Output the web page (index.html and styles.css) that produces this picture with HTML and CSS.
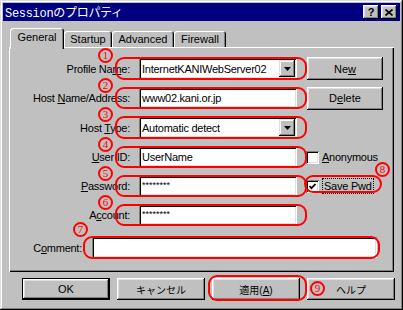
FILE: index.html
```html
<!DOCTYPE html>
<html lang="ja">

<head>
  <meta charset="UTF-8">
  <meta name="viewport" content="width=device-width, initial-scale=1.0">
  <title>Sessionのプロパティ</title>
  <link rel="stylesheet" href="styles.css">
</head>

<body>

  <div class="window">

    <div class="titlebar">
      <span class="title">Sessionのプロパティ</span>
      <div class="title-buttons">
        <button class="title-btn">?</button>
        <button class="title-btn">
          <svg width="8" height="7" viewBox="0 0 8 7">
            <path d="M0.5 0.5 L7.5 6.5 M7.5 0.5 L0.5 6.5" stroke="#000" stroke-width="1.7" fill="none" />
          </svg>
        </button>
      </div>
    </div>

    <div class="tabs">
      <div class="tab tab-general active">General</div>
      <div class="tab tab-startup">Startup</div>
      <div class="tab tab-advanced">Advanced</div>
      <div class="tab tab-firewall">Firewall</div>
    </div>

    <div class="panel">

      <div class="row">
        <span class="label">Profile Na<u>m</u>e:</span>
        <div class="hl">
          <span class="num">1</span>
          <div class="combo">
            <span class="value">InternetKANIWebServer02</span>
            <span class="drop">
              <svg width="7" height="4" viewBox="0 0 7 4"><polygon points="0,0 7,0 3.5,4" fill="#000" /></svg>
            </span>
          </div>
        </div>
        <button class="btn side-btn">Ne<u>w</u></button>
      </div>

      <div class="row">
        <span class="label">Host <u>N</u>ame/Address:</span>
        <div class="hl">
          <span class="num">2</span>
          <div class="field">www02.kani.or.jp</div>
        </div>
        <button class="btn side-btn">D<u>e</u>lete</button>
      </div>

      <div class="row">
        <span class="label">Host <u>T</u>ype:</span>
        <div class="hl">
          <span class="num">3</span>
          <div class="combo">
            <span class="value">Automatic detect</span>
            <span class="drop">
              <svg width="7" height="4" viewBox="0 0 7 4"><polygon points="0,0 7,0 3.5,4" fill="#000" /></svg>
            </span>
          </div>
        </div>
      </div>

      <div class="row">
        <span class="label"><u>U</u>ser ID:</span>
        <div class="hl">
          <span class="num">4</span>
          <div class="field">UserName</div>
        </div>
        <span class="check"></span>
        <span class="check-label"><u>A</u>nonymous</span>
      </div>

      <div class="row">
        <span class="label"><u>P</u>assword:</span>
        <div class="hl">
          <span class="num">5</span>
          <div class="field pw">********</div>
        </div>
        <div class="hl-check">
          <span class="num num-save">8</span>
          <span class="check">
            <svg width="7" height="7" viewBox="0 0 7 7">
              <polyline points="0.5,3 2.5,5.2 6.5,1" stroke="#000" stroke-width="1.8" fill="none" />
            </svg>
          </span>
          <span class="check-label focus">Sa<u>v</u>e Pwd</span>
        </div>
      </div>

      <div class="row">
        <span class="label">A<u>c</u>count:</span>
        <div class="hl">
          <span class="num">6</span>
          <div class="field pw">********</div>
        </div>
      </div>

      <div class="row row-comment">
        <span class="label label-comment">C<u>o</u>mment:</span>
        <div class="hl hl-comment">
          <span class="num num-comment">7</span>
          <div class="field field-comment"></div>
        </div>
      </div>

    </div>

    <div class="actions">
      <button class="btn btn-default">OK</button>
      <button class="btn jp">キャンセル</button>
      <div class="hl-apply">
        <button class="btn jp">適用(<u>A</u>)</button>
        <span class="num num-apply">9</span>
      </div>
      <button class="btn jp">ヘルプ</button>
    </div>

  </div>

</body>

</html>
```

FILE: styles.css
```css
* {
  box-sizing: border-box;
}

body {
  margin: 0;
  background-color: #c0c0c0;
  font-family: "Liberation Sans", Arial, "Noto Sans CJK JP", sans-serif;
  font-size: 11px;
  color: #000;
}

u {
  text-decoration: underline;
  text-underline-offset: 1px;
}

.window {
  width: 403px;
  height: 310px;
  padding: 3px;
  background-color: #c0c0c0;
  box-shadow: inset -1px -1px #000, inset 1px 1px #dfdfdf, inset -2px -2px #808080, inset 2px 2px #fff;
  display: flex;
  flex-direction: column;
}

/* title bar */

.titlebar {
  height: 18px;
  background-color: #000080;
  color: #fff;
  display: flex;
  align-items: center;
  justify-content: space-between;
  padding: 0 3px 0 2px;
}

.title {
  font-family: "Liberation Mono", "Noto Sans CJK JP", monospace;
  font-size: 12px;
  letter-spacing: -0.3px;
}

.title-buttons {
  display: flex;
  gap: 2px;
}

.title-btn {
  width: 16px;
  height: 14px;
  padding: 0;
  border: none;
  background-color: #c0c0c0;
  box-shadow: inset -1px -1px #000, inset 1px 1px #fff, inset -2px -2px #808080, inset 2px 2px #dfdfdf;
  display: flex;
  align-items: center;
  justify-content: center;
  font-family: "Liberation Sans", sans-serif;
  font-size: 11px;
  font-weight: bold;
  color: #000;
}

/* tabs */

.tabs {
  display: flex;
  align-items: flex-end;
  height: 19px;
  margin: 7px 0 0 7px;
}

.tab {
  height: 16px;
  display: flex;
  align-items: center;
  justify-content: center;
  background-color: #c0c0c0;
  border-radius: 3px 3px 0 0;
  box-shadow: inset 1px 1px #fff, inset -1px 0 #000, inset -2px 0 #808080;
}

.tab.active {
  height: 21px;
  margin-bottom: -2px;
  padding-bottom: 3px;
  position: relative;
  z-index: 1;
}

.tab-general {
  width: 54px;
}

.tab-startup {
  width: 48px;
}

.tab-advanced {
  width: 62px;
}

.tab-firewall {
  width: 52px;
}

/* tab page */

.panel {
  width: 385px;
  height: 225px;
  margin-left: 6px;
  padding: 11px 2px 0;
  box-shadow: inset 1px 1px #fff, inset -1px -1px #000, inset -2px -2px #808080;
  display: flex;
  flex-direction: column;
  gap: 9px;
}

.row {
  display: flex;
  align-items: center;
  height: 20px;
}

.label {
  width: 119px;
  margin-right: 9px;
  text-align: right;
  letter-spacing: -0.25px;
  white-space: nowrap;
}

.hl {
  position: relative;
}

/* red annotation ring */
.hl::after,
.hl-check::after,
.hl-apply::after {
  content: "";
  position: absolute;
  border: 2px solid #f00;
  border-radius: 9px;
  pointer-events: none;
  z-index: 2;
}

.hl::after {
  left: -24px;
  right: -10px;
  top: -1px;
  bottom: -1px;
}

.num {
  position: absolute;
  left: -41px;
  top: -10px;
  width: 15px;
  height: 15px;
  border: 2px solid #f00;
  border-radius: 50%;
  color: #f00;
  font-family: "Liberation Serif", serif;
  font-size: 11px;
  line-height: 11px;
  display: flex;
  align-items: center;
  justify-content: center;
}

.field,
.combo {
  width: 158px;
  height: 20px;
  background-color: #fff;
  box-shadow: inset 1px 1px #808080, inset -1px -1px #fff, inset 2px 2px #000, inset -2px -2px #dfdfdf;
  display: flex;
  align-items: center;
  padding-left: 3px;
  letter-spacing: -0.25px;
  white-space: nowrap;
}

.pw {
  font-size: 9px;
  letter-spacing: 0;
  align-items: flex-start;
  padding-top: 4px;
}

.combo {
  height: 21px;
  padding: 2px;
}

.combo .value {
  flex: 1;
  padding-left: 1px;
}

.drop {
  width: 16px;
  height: 17px;
  background-color: #c0c0c0;
  box-shadow: inset -1px -1px #000, inset 1px 1px #dfdfdf, inset -2px -2px #808080, inset 2px 2px #fff;
  display: flex;
  align-items: center;
  justify-content: center;
}

.row:first-child {
  height: 21px;
}

.row:nth-child(3) {
  height: 21px;
}

.check {
  flex-shrink: 0;
  width: 13px;
  height: 13px;
  margin-left: 9px;
  background-color: #fff;
  box-shadow: inset 1px 1px #808080, inset -1px -1px #fff, inset 2px 2px #000, inset -2px -2px #dfdfdf;
  display: flex;
  align-items: center;
  justify-content: center;
}

.check-label {
  margin-left: 3px;
  letter-spacing: -0.25px;
  white-space: nowrap;
}

.hl-check {
  position: relative;
  flex-shrink: 0;
  width: 66px;
  height: 20px;
  margin-left: 9px;
  display: flex;
  align-items: center;
}

.hl-check .check {
  margin-left: 0;
}

.hl-check::after {
  left: -2px;
  right: -10px;
  top: -1px;
  bottom: 3px;
}

.num-save {
  left: 69px;
  top: -14px;
}

.focus {
  height: 16px;
  padding: 0 1px;
  border: 1px dotted #000;
  display: flex;
  align-items: center;
}

.row-comment {
  height: 21px;
  margin-top: 3px;
}

.label-comment {
  width: 71px;
  margin-right: 10px;
}

.field-comment {
  width: 285px;
  height: 21px;
}

.hl-comment::after {
  left: -9px;
  right: -3px;
}

.num-comment {
  left: -19px;
  top: -15px;
}

/* buttons */

.btn {
  height: 22px;
  padding: 0;
  border: none;
  background-color: #c0c0c0;
  box-shadow: inset -1px -1px #000, inset 1px 1px #fff, inset -2px -2px #808080, inset 2px 2px #dfdfdf;
  font-family: "Liberation Sans", "Noto Sans CJK JP", sans-serif;
  font-size: 11px;
  color: #000;
}

.side-btn {
  width: 76px;
  height: 23px;
  margin-left: 10px;
}

.actions {
  display: flex;
  gap: 7px;
  margin: 6px 0 0 19px;
}

.actions .btn {
  width: 88px;
}

.jp {
  font-size: 10px;
}

.btn-default {
  box-shadow: inset 0 0 0 1px #000, inset -2px -2px #000, inset 2px 2px #fff, inset -3px -3px #808080, inset 3px 3px #dfdfdf;
}

.hl-apply {
  position: relative;
}

.hl-apply::after {
  left: -4px;
  right: -7px;
  top: -3px;
  bottom: -1px;
}

.num-apply {
  left: 98px;
  top: 3px;
}
```
